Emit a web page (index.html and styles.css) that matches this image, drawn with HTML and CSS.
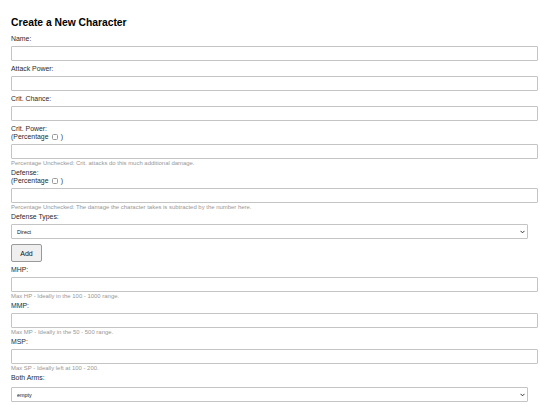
FILE: index.html
```html
<!DOCTYPE html>
<html lang="en">
<head>
<meta charset="utf-8">
<title>Create a New Character</title>
<link rel="stylesheet" href="styles.css">
</head>
<body>
<div class="page">
  <h2 class="title">Create a New Character</h2>
  <form class="form">
    <div class="field">
      <label class="label" for="name">Name:</label>
      <input class="text" id="name" type="text">
    </div>
    <div class="field">
      <label class="label" for="atk">Attack Power:</label>
      <input class="text" id="atk" type="text">
    </div>
    <div class="field">
      <label class="label" for="cc">Crit. Chance:</label>
      <input class="text" id="cc" type="text">
    </div>
    <div class="field field-help">
      <label class="label" for="cp">Crit. Power:<br>(Percentage <input class="check" type="checkbox"> )</label>
      <input class="text" id="cp" type="text">
      <div class="help">Percentage Unchecked: Crit. attacks do this much additional damage.</div>
    </div>
    <div class="field field-help">
      <label class="label" for="def">Defense:<br>(Percentage <input class="check" type="checkbox"> )</label>
      <input class="text" id="def" type="text">
      <div class="help">Percentage Unchecked: The damage the character takes is subtracted by the number here.</div>
    </div>
    <div class="field">
      <label class="label" for="dt">Defense Types:</label>
      <div class="select-wrap">
        <select class="select" id="dt"><option>Direct</option></select>
        <svg class="chev" viewBox="0 0 6 4" width="5" height="4"><path d="M0.6 0.6 L3 3 L5.4 0.6" fill="none" stroke="#222" stroke-width="1.1"/></svg>
      </div>
      <button class="btn" type="button">Add</button>
    </div>
    <div class="field field-help">
      <label class="label" for="mhp">MHP:</label>
      <input class="text" id="mhp" type="text">
      <div class="help">Max HP - Ideally in the 100 - 1000 range.</div>
    </div>
    <div class="field field-help">
      <label class="label" for="mmp">MMP:</label>
      <input class="text" id="mmp" type="text">
      <div class="help">Max MP - Ideally in the 50 - 500 range.</div>
    </div>
    <div class="field field-help">
      <label class="label" for="msp">MSP:</label>
      <input class="text" id="msp" type="text">
      <div class="help">Max SP - Ideally left at 100 - 200.</div>
    </div>
    <div class="field">
      <label class="label label-last" for="arms">Both Arms:</label>
      <div class="select-wrap">
        <select class="select" id="arms"><option>empty</option></select>
        <svg class="chev" viewBox="0 0 6 4" width="5" height="4"><path d="M0.6 0.6 L3 3 L5.4 0.6" fill="none" stroke="#222" stroke-width="1.1"/></svg>
      </div>
    </div>
  </form>
</div>
</body>
</html>
```

FILE: styles.css
```css
html, body {
  margin: 0;
  padding: 0;
  background: #ffffff;
}
body {
  font-family: "Liberation Sans", Arial, sans-serif;
  color: #111111;
  overflow: hidden;
}
.page {
  padding: 0 12px 0 11px;
}
.title {
  font-size: 10.3px;
  line-height: 12px;
  font-weight: bold;
  margin: 17px 0 6px 0;
  color: #000000;
}
.form {
  display: block;
}
.field {
  margin-bottom: 4px;
}
.field-help {
  margin-bottom: 2px;
}
.label {
  display: block;
  font-size: 6.9px;
  line-height: 8px;
  margin-bottom: 3px;
  color: #2a2a2a;
}
.label-last {
  margin-bottom: 5px;
}
.check {
  -webkit-appearance: none;
  appearance: none;
  width: 6px;
  height: 6px;
  margin: 0 1px 0 1.5px;
  border: 1px solid #9a9a9a;
  border-radius: 1.5px;
  box-sizing: border-box;
  vertical-align: -1px;
  background: #ffffff;
}
.text {
  display: block;
  width: 100%;
  height: 13px;
  padding: 0 4px;
  border: 1px solid #c4c4c4;
  border-radius: 1px;
  box-sizing: content-box;
  font-size: 6.67px;
  font-family: inherit;
  background: #ffffff;
  margin: 0;
}
.help {
  font-size: 5.95px;
  line-height: 8px;
  color: #979797;
}
.select-wrap {
  position: relative;
}
.select {
  -webkit-appearance: none;
  appearance: none;
  display: block;
  width: 100%;
  height: 15px;
  padding: 0 5px;
  margin: 0;
  border: 1px solid #c4c4c4;
  border-radius: 1px;
  font-size: 5.4px;
  font-family: inherit;
  background: #ffffff;
  color: #111111;
}
.chev {
  position: absolute;
  right: 3px;
  top: 6px;
}
.btn {
  display: block;
  margin-top: 5px;
  width: 31px;
  height: 18px;
  padding: 0;
  font-size: 7px;
  font-family: inherit;
  background: #efefef;
  border: 1px solid #9a9a9a;
  border-radius: 2px;
  color: #111111;
}
```
